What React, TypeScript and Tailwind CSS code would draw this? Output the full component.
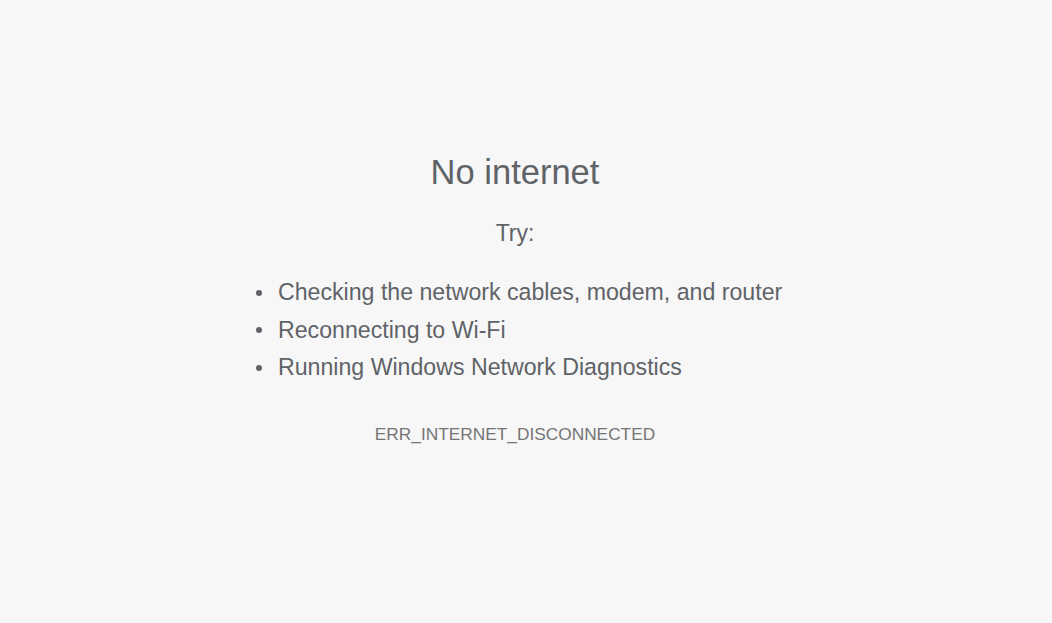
import React from 'react';

const tips = [
  'Checking the network cables, modem, and router',
  'Reconnecting to Wi-Fi',
  'Running Windows Network Diagnostics',
];

export default function App() {
  return (
    <div
      className="min-h-[623px] w-full bg-[#f7f7f7] text-[#5f6368] flex justify-center pr-[22px]"
      style={{ fontFamily: '"Liberation Sans", Arial, sans-serif' }}
    >
      <div className="w-[560px] pt-[152px] flex flex-col">
        <h1 className="text-center text-[34.5px] leading-[40px] font-normal">No internet</h1>
        <p className="mt-[27px] text-center text-[23px] leading-[28px]">Try:</p>
        <ul className="mt-[27px] pl-[21px] text-[23.15px] leading-[37.5px]">
          {tips.map((t) => (
            <li key={t} className="flex items-center">
              <span className="w-[6px] h-[6px] rounded-full bg-[#5f6368] mr-[16px] shrink-0" />
              <span>{t}</span>
            </li>
          ))}
        </ul>
        <div className="mt-[37px] text-center text-[17.3px] leading-[20px] text-[#757575]">
          ERR_INTERNET_DISCONNECTED
        </div>
      </div>
    </div>
  );
}
